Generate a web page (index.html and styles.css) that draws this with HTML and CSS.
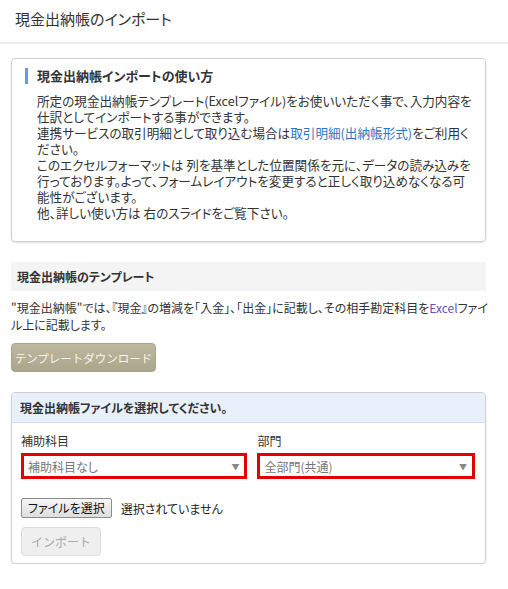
FILE: index.html
```html
<!DOCTYPE html>
<html lang="ja">
<head>
<meta charset="utf-8">
<link rel="stylesheet" href="styles.css">
</head>
<body>
<header class="page-head">
  <h1 class="page-title">現金出納帳のインポート</h1>
</header>
<main class="content">
  <section class="info-box">
    <h2 class="info-title">現金出納帳インポートの使い方</h2>
    <p class="info-text">所定の現金出納帳テンプレート(Excelファイル)をお使いいただく事で、入力内容を<br>仕訳としてインポートする事ができます。<br>連携サービスの取引明細として取り込む場合は<a class="link" href="#">取引明細(出納帳形式)</a>をご利用く<br>ださい。<br>このエクセルフォーマットは 列を基準とした位置関係を元に、データの読み込みを<br>行っております。よって、フォームレイアウトを変更すると正しく取り込めなくなる可<br>能性がございます。<br>他、詳しい使い方は 右のスライドをご覧下さい。</p>
  </section>

  <section class="template">
    <h3 class="band">現金出納帳のテンプレート</h3>
    <p class="template-text">"現金出納帳"では、『現金』の増減を「入金」、「出金」に記載し、その相手勘定科目を<span class="excel">Excel</span>ファイ<br>ル上に記載します。</p>
    <button class="btn-download" type="button">テンプレートダウンロード</button>
  </section>

  <section class="panel">
    <div class="panel-head">現金出納帳ファイルを選択してください。</div>
    <div class="panel-body">
      <div class="fields">
        <div class="field">
          <label class="field-label">補助科目</label>
          <div class="select"><span>補助科目なし</span><span class="arrow">▼</span></div>
        </div>
        <div class="field">
          <label class="field-label">部門</label>
          <div class="select"><span>全部門(共通)</span><span class="arrow">▼</span></div>
        </div>
      </div>
      <div class="file-row">
        <span class="file-btn">ファイルを選択</span>
        <span class="file-name">選択されていません</span>
      </div>
      <button class="btn-import" type="button" disabled>インポート</button>
    </div>
  </section>
</main>
</body>
</html>
```

FILE: styles.css
```css
* { box-sizing: border-box; }
body {
  margin: 0;
  background: #fff;
  color: #333;
  font-family: "Noto Sans CJK JP", "Noto Sans", sans-serif;
  font-feature-settings: "palt";
}
.page-head {
  height: 44px;
  border-bottom: 2px solid #ececec;
  padding: 8px 15px 0;
}
.page-title {
  margin: 0;
  font-size: 15px;
  font-weight: normal;
  line-height: 22px;
  color: #333;
}
.content {
  padding: 14px 11px 0;
  width: 497px;
}
.info-box {
  border: 1px solid #d0d0d0;
  border-radius: 4px;
  box-shadow: 0 1px 2px rgba(0,0,0,0.12);
  padding: 9px 10px 9px 13px;
  height: 184px;
}
.info-title {
  margin: 0;
  border-left: 3px solid #6a98d8;
  padding-left: 9px;
  font-size: 13px;
  line-height: 16px;
  font-weight: bold;
  color: #333;
}
.info-text {
  margin: 9px 0 0 12px;
  font-size: 12.6px;
  line-height: 16px;
  white-space: nowrap;
}
.link { color: #2f74c0; text-decoration: none; }
.template { margin-top: 20px; }
.band {
  margin: 0;
  background: #f4f4f4;
  height: 29px;
  padding-left: 6px;
  font-size: 12px;
  line-height: 29px;
  font-weight: bold;
  color: #333;
}
.template-text {
  margin: 8px 0 0;
  font-size: 12px;
  line-height: 17px;
  white-space: nowrap;
}
.excel { color: #6a4fb0; }
.btn-download {
  display: block;
  margin-top: 10px;
  width: 145px;
  height: 29px;
  border: 1px solid #a9a58c;
  border-radius: 4px;
  background: linear-gradient(#bdb9a0, #aaa68c);
  color: #f7f6ef;
  font-family: inherit;
  font-size: 11.5px;
  white-space: nowrap;
  padding: 0;
}
.panel {
  margin-top: 20px;
  border: 1px solid #d0d0d0;
  border-radius: 4px;
  box-shadow: 0 1px 2px rgba(0,0,0,0.12);
  height: 172px;
  overflow: hidden;
}
.panel-head {
  background: #e8f0fb;
  height: 30px;
  border-bottom: 1px solid #d6dde6;
  padding-left: 8px;
  font-size: 12px;
  font-weight: bold;
  line-height: 29px;
}
.panel-body { padding: 10px 10px 0 9px; }
.fields { display: flex; gap: 10px; }
.field { display: flex; flex-direction: column; }
.field:first-child { width: 227px; }
.field:last-child { width: 218px; }
.field-label {
  font-size: 12px;
  line-height: 16px;
  margin-bottom: 4px;
}
.select {
  height: 26px;
  border: 3px solid #e30000;
  display: flex;
  align-items: center;
  justify-content: space-between;
  padding: 0 5px 0 4px;
  font-size: 12px;
  color: #777;
}
.arrow { font-size: 8px; color: #888; }
.file-row {
  margin-top: 19px;
  display: flex;
  align-items: center;
  gap: 9px;
  font-size: 12px;
}
.file-btn {
  display: inline-block;
  border: 1px solid #8c8c8c;
  border-radius: 2px;
  background: linear-gradient(#f6f6f6, #dedede);
  padding: 0 6px;
  height: 20px;
  line-height: 18px;
  color: #111;
}
.file-name { color: #222; }
.btn-import {
  display: block;
  margin-top: 9px;
  width: 80px;
  height: 29px;
  border: 1px solid #dcdcdc;
  border-radius: 4px;
  background: #efefef;
  color: #aaa;
  font-family: inherit;
  font-size: 12px;
  padding: 0;
}
```
